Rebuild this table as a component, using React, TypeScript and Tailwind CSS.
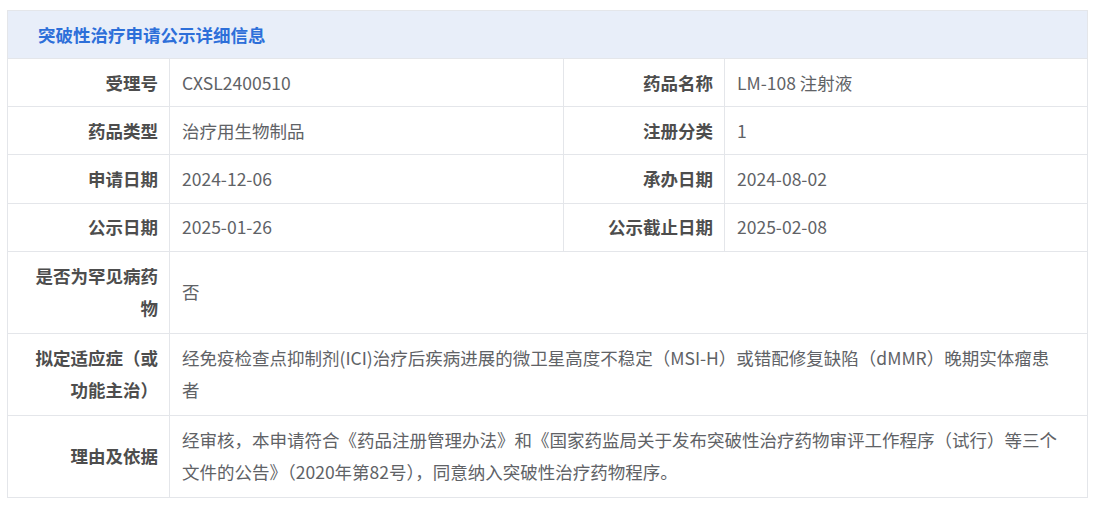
import React from 'react';

interface Field {
    label: string;
    value: string;
}

const pairs: [Field, Field][] = [
    [{ label: '受理号', value: 'CXSL2400510' }, { label: '药品名称', value: 'LM-108 注射液' }],
    [{ label: '药品类型', value: '治疗用生物制品' }, { label: '注册分类', value: '1' }],
    [{ label: '申请日期', value: '2024-12-06' }, { label: '承办日期', value: '2024-08-02' }],
    [{ label: '公示日期', value: '2025-01-26' }, { label: '公示截止日期', value: '2025-02-08' }],
];

const wide: Field[] = [
    { label: '是否为罕见病药物', value: '否' },
    {
        label: '拟定适应症（或功能主治）',
        value: '经免疫检查点抑制剂(ICI)治疗后疾病进展的微卫星高度不稳定（MSI-H）或错配修复缺陷（dMMR）晚期实体瘤患者',
    },
    {
        label: '理由及依据',
        value: '经审核，本申请符合《药品注册管理办法》和《国家药监局关于发布突破性治疗药物审评工作程序（试行）等三个文件的公告》（2020年第82号），同意纳入突破性治疗药物程序。',
    },
];

const labelCls = 'border border-[#e4e6ea] pl-3 pr-[11px] text-right align-middle font-bold text-[#4d4d4d]';
const valueCls = 'border border-[#e4e6ea] pl-3 pr-6 text-left align-middle text-[#606266]';

const App: React.FC = () => (
    <div className="min-h-[508px] w-[1101px] bg-white pl-[7px] pt-[10px] font-['Noto_Sans_CJK_SC','Noto_Sans',sans-serif] text-[17.5px] leading-8">
        <table className="w-[1080px] table-fixed border-collapse">
            <colgroup>
                <col className="w-[162px]" />
                <col className="w-[394px]" />
                <col className="w-[161px]" />
                <col className="w-[363px]" />
            </colgroup>
            <thead>
                <tr>
                    <th colSpan={4} className="h-[48px] border border-[#e4e6ea] bg-[#e8eef9] pl-[30px] text-left align-middle font-bold text-[#2d6fd9]">
                        突破性治疗申请公示详细信息
                    </th>
                </tr>
            </thead>
            <tbody>
                {pairs.map(([a, b]) => (
                    <tr key={a.label}>
                        <td className={`${labelCls} py-[7.6px]`}>{a.label}</td>
                        <td className={`${valueCls} py-[7.6px]`}>{a.value}</td>
                        <td className={`${labelCls} py-[7.6px]`}>{b.label}</td>
                        <td className={`${valueCls} py-[7.6px]`}>{b.value}</td>
                    </tr>
                ))}
                {wide.map(f => (
                    <tr key={f.label}>
                        <td className={`${labelCls} py-[8.5px]`}>{f.label}</td>
                        <td colSpan={3} className={`${valueCls} py-[8.5px]`}>{f.value}</td>
                    </tr>
                ))}
            </tbody>
        </table>
    </div>
);

export default App;
